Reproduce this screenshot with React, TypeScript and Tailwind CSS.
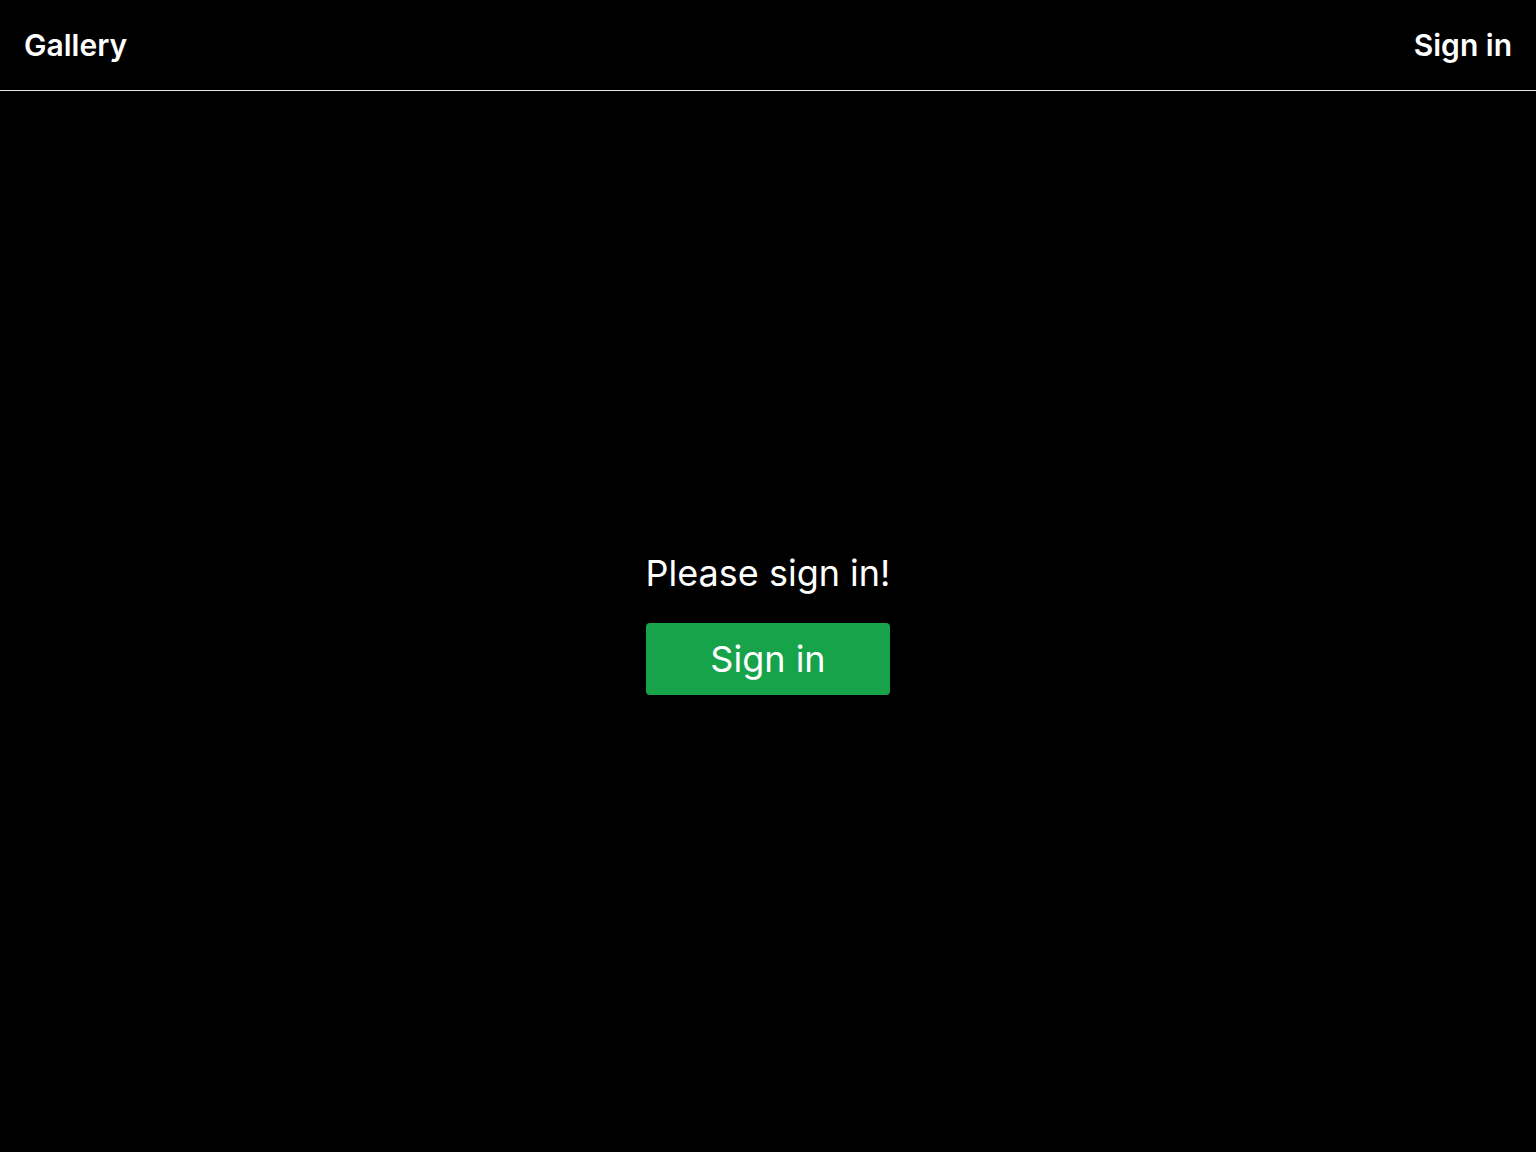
export default function App() {
  return (
    <div className="min-h-screen flex flex-col bg-black text-white font-['Inter',sans-serif]">
      {/* Header */}
      <header className="h-[91px] flex items-center justify-between px-6 border-b border-gray-200">
        <a href="#" className="text-3xl font-semibold">
          Gallery
        </a>
        <button type="button" className="text-3xl font-semibold">
          Sign in
        </button>
      </header>

      {/* Sign in prompt */}
      <main className="flex-1 flex items-center justify-center pt-1">
        <div className="flex flex-col gap-[30px]">
          <p className="text-4xl">Please sign in!</p>
          <button type="button" className="w-full bg-[#16a34a] rounded py-4 text-4xl">
            Sign in
          </button>
        </div>
      </main>
    </div>
  )
}
